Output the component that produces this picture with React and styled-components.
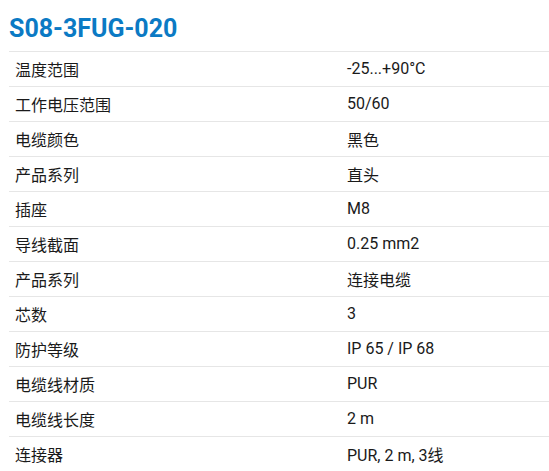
import React from "react";
import styled, { createGlobalStyle } from "styled-components";

const Global = createGlobalStyle`
  html, body { margin: 0; padding: 0; background: #fff; }
  body { font-family: Roboto, "Noto Sans CJK SC", sans-serif; color: #1a1a1a; overflow: hidden; }
`;

const Page = styled.div`
  padding: 14px 0 0 9px;
`;

const Title = styled.h2`
  margin: 0 0 8px;
  font-family: Roboto, "Noto Sans CJK SC", sans-serif;
  font-weight: 700;
  font-size: 25px;
  line-height: 29px;
  color: #0b7ac4;
  letter-spacing: 0;
`;

const Table = styled.div`
  width: 560px;
  display: grid;
  grid-template-columns: 332px 1fr;
`;

const Cell = styled.div`
  height: 35px;
  box-sizing: border-box;
  border-top: 1px solid #e6e6e6;
  padding: 0 6px 1px;
  display: flex;
  align-items: center;
  font-size: 16px;
  font-family: Roboto, "Noto Sans CJK SC", sans-serif;
  color: #1a1a1a;
  white-space: nowrap;
`;

const rows = [
  ["温度范围", "-25...+90°C"],
  ["工作电压范围", "50/60"],
  ["电缆颜色", "黑色"],
  ["产品系列", "直头"],
  ["插座", "M8"],
  ["导线截面", "0.25 mm2"],
  ["产品系列", "连接电缆"],
  ["芯数", "3"],
  ["防护等级", "IP 65 / IP 68"],
  ["电缆线材质", "PUR"],
  ["电缆线长度", "2 m"],
  ["连接器", "PUR, 2 m, 3线"],
];

export default function App() {
  return (
    <Page>
      <Global />
      <Title>S08-3FUG-020</Title>
      <Table>
        {rows.map(([k, v], i) => (
          <React.Fragment key={i}>
            <Cell>{k}</Cell>
            <Cell>{v}</Cell>
          </React.Fragment>
        ))}
      </Table>
    </Page>
  );
}
